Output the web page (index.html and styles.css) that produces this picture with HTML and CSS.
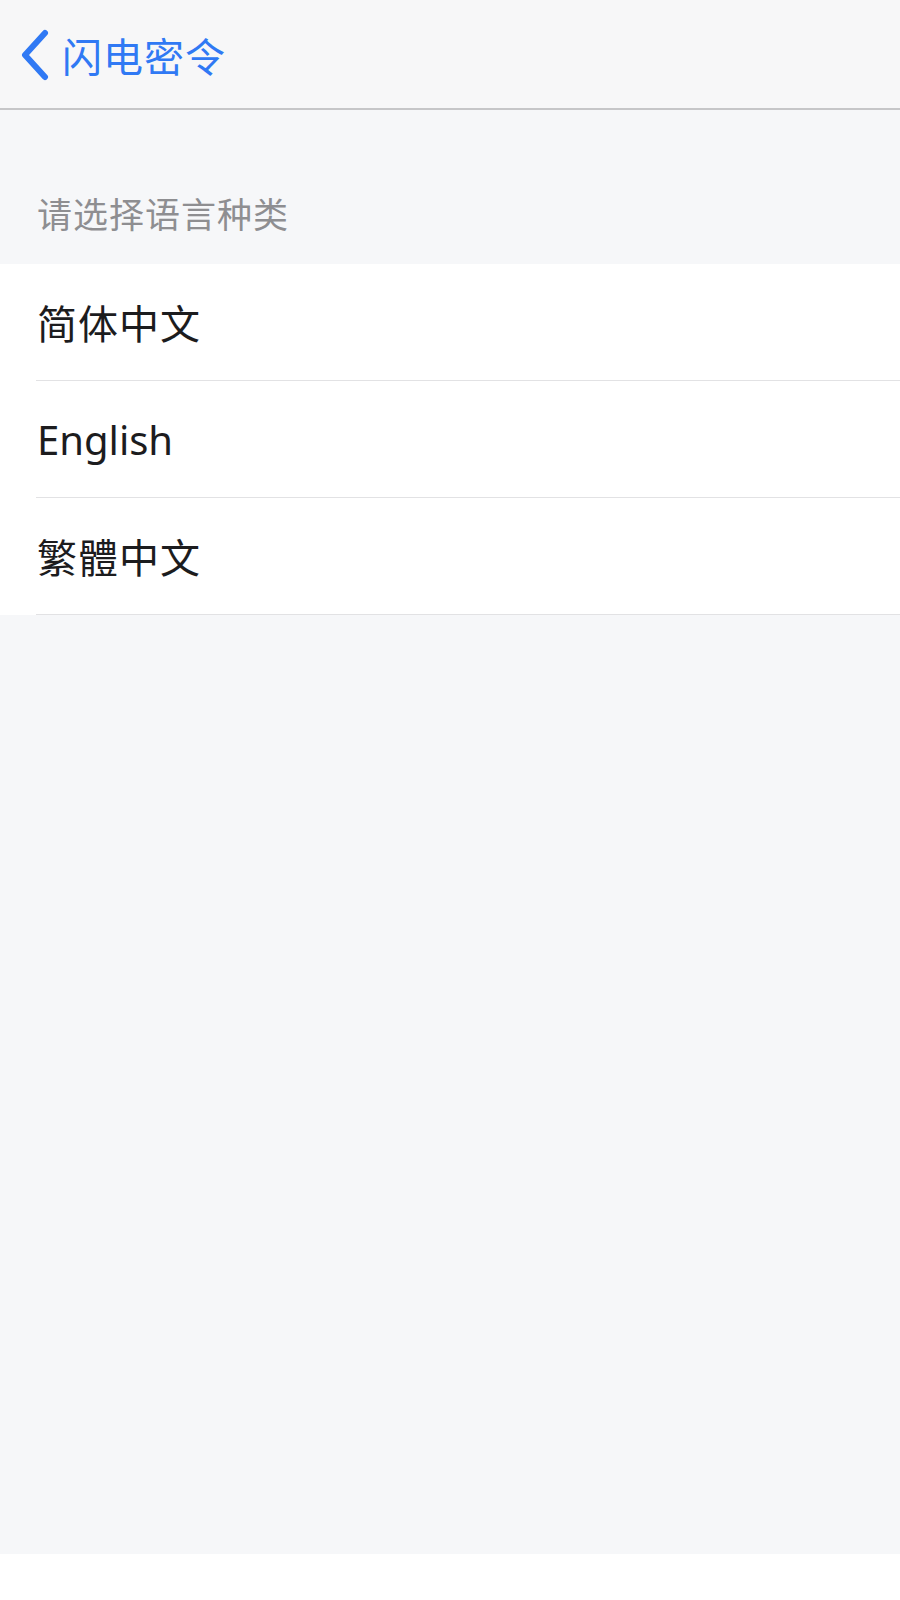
FILE: index.html
```html
<!DOCTYPE html>
<html lang="zh-CN">
  <head>
    <meta charset="UTF-8" />
    <title>语言设置</title>
    <link rel="stylesheet" href="styles.css">
  </head>

  <body>
    <div class="page">
      <div class="nav-bar">
        <a class="back-link" href="#">
          <svg class="back-icon" width="34" height="52" viewBox="0 0 34 52">
            <polyline points="27,4 7,26 27,48" fill="none" stroke="#3079f4" stroke-width="6" stroke-linecap="round" stroke-linejoin="round" />
          </svg>
          <span class="back-title">闪电密令</span>
        </a>
      </div>

      <div class="section-title">请选择语言种类</div>

      <ul class="lang-list">
        <li class="lang-item">简体中文</li>
        <li class="lang-item english">English</li>
        <li class="lang-item">繁體中文</li>
      </ul>
    </div>
  </body>
</html>
```

FILE: styles.css
```css
body {
  margin: 0;
  background: #ffffff;
  font-family: "Noto Sans", "Noto Sans CJK SC", sans-serif;
}

.page {
  height: 1554px;
  background: #f6f7f9;
}

.nav-bar {
  height: 108px;
  background: #f7f7f8;
  border-bottom: 2px solid #c6c6c8;
  display: flex;
  align-items: center;
}

.back-link {
  display: flex;
  align-items: center;
  text-decoration: none;
  margin-left: 18px;
  margin-top: 2px;
}

.back-icon {
  display: block;
}

.back-title {
  font-family: "Noto Sans CJK SC", sans-serif;
  font-size: 40px;
  color: #3079f4;
  margin-left: 10px;
  letter-spacing: 1px;
}

.section-title {
  height: 154px;
  box-sizing: border-box;
  padding: 82px 0 0 37px;
  font-family: "Noto Sans CJK SC", sans-serif;
  font-size: 35px;
  line-height: 42px;
  color: #8e8e91;
  letter-spacing: 1px;
}

.lang-list {
  list-style: none;
  margin: 0;
  padding: 0 0 0 36px;
  background: #ffffff;
}

.lang-item {
  height: 116px;
  border-bottom: 1px solid #e2e2e4;
  display: flex;
  align-items: center;
  font-family: "Noto Sans CJK SC", sans-serif;
  font-size: 40px;
  color: #1c1c1e;
  letter-spacing: 1px;
  padding-left: 1px;
}

.lang-item.english {
  font-family: "Noto Sans", sans-serif;
  letter-spacing: 0;
}
```
